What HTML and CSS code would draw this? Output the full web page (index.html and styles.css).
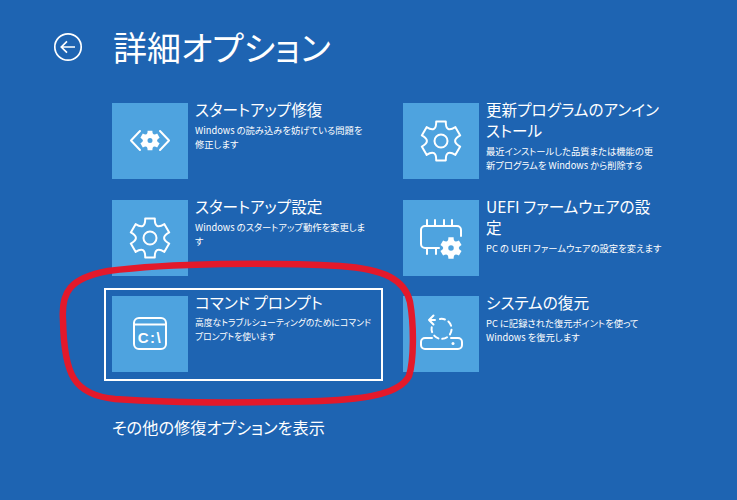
FILE: index.html
```html
<!DOCTYPE html>
<html lang="ja">
<head>
<meta charset="utf-8">
<title>詳細オプション</title>
<link rel="stylesheet" href="styles.css">
</head>
<body>
<div class="page">
  <header class="head">
    <svg class="back" viewBox="0 0 30 30"><circle cx="15" cy="15" r="13.200"/><path d="M22 15H8.500M14 9.300L8.300 15l5.700 5.700"/></svg>
    <h1>詳細オプション</h1>
  </header>
  <main class="grid">
    <section class="item">
      <div class="tile"><svg viewBox="0 0 76 76">
        <path class="ln" d="M28 28L19 37.500L28 47M48 28L57 37.500L48 47"/>
        <g transform="translate(38 37.500) scale(.5)"><path class="solid" fill-rule="evenodd" d="M-4.800-19.400H4.800Q4.500-7.800 14.400-13.860L19.200-5.540Q9 0 19.200 5.540L14.400 13.860Q4.500 7.800 4.800 19.400H-4.800Q-4.500 7.800-14.400 13.860L-19.200 5.540Q-9 0-19.200-5.540L-14.400-13.860Q-4.500-7.800-4.800-19.400ZM5 0A5 5 0 1 0-5 0A5 5 0 1 0 5 0Z"/></g>
      </svg></div>
      <div class="copy"><h2>スタートアップ修復</h2><p>Windows の読み込みを妨げている問題を<br>修正します</p></div>
    </section>
    <section class="item">
      <div class="tile"><svg viewBox="0 0 76 76"><g transform="translate(38 38)">
        <path class="ln" d="M-4.800-19.400H4.800Q4.500-7.800 14.400-13.860L19.200-5.540Q9 0 19.200 5.540L14.400 13.860Q4.500 7.800 4.800 19.400H-4.800Q-4.500 7.800-14.400 13.860L-19.200 5.540Q-9 0-19.200-5.540L-14.400-13.860Q-4.500-7.800-4.800-19.400Z"/><circle class="ln" r="6.500"/>
      </g></svg></div>
      <div class="copy"><h2>更新プログラムのアンイン<br>ストール</h2><p>最近インストールした品質または機能の更<br>新プログラムを Windows から削除する</p></div>
    </section>
    <section class="item">
      <div class="tile"><svg viewBox="0 0 76 76"><g transform="translate(38 38)">
        <path class="ln" d="M-4.800-19.400H4.800Q4.500-7.800 14.400-13.860L19.200-5.540Q9 0 19.200 5.540L14.400 13.860Q4.500 7.800 4.800 19.400H-4.800Q-4.500 7.800-14.400 13.860L-19.200 5.540Q-9 0-19.200-5.540L-14.400-13.860Q-4.500-7.800-4.800-19.400Z"/><circle class="ln" r="6.500"/>
      </g></svg></div>
      <div class="copy"><h2>スタートアップ設定</h2><p>Windows のスタートアップ動作を変更しま<br>す</p></div>
    </section>
    <section class="item">
      <div class="tile"><svg viewBox="0 0 76 76">
        <path class="ln" d="M36 48H22a4 4 0 0 1-4-4V30a4 4 0 0 1 4-4H54a4 4 0 0 1 4 4V36M24 26V20M32 26V20M41 26V20M49 26V20M24 48V54M33 48V54"/>
        <g transform="translate(48 48) scale(.55)"><path class="solid" fill-rule="evenodd" d="M-4.800-19.400H4.800Q4.500-7.800 14.400-13.860L19.200-5.540Q9 0 19.200 5.540L14.400 13.860Q4.500 7.800 4.800 19.400H-4.800Q-4.500 7.800-14.400 13.860L-19.200 5.540Q-9 0-19.200-5.540L-14.400-13.860Q-4.500-7.800-4.800-19.400ZM5 0A5 5 0 1 0-5 0A5 5 0 1 0 5 0Z"/></g>
      </svg></div>
      <div class="copy"><h2>UEFI ファームウェアの設<br>定</h2><p>PC の UEFI ファームウェアの設定を変えます</p></div>
    </section>
    <section class="item selected">
      <div class="tile"><svg viewBox="0 0 76 76">
        <rect class="ln" x="22" y="22" width="32" height="31" rx="5"/><path class="ln" d="M22 28.500H54"/>
        <text class="cmd" x="38" y="46.500">C:\</text>
      </svg></div>
      <div class="copy"><h2>コマンド プロンプト</h2><p>高度なトラブルシューティングのためにコマンド<br>プロンプトを使います</p></div>
    </section>
    <section class="item">
      <div class="tile"><svg viewBox="0 0 76 76">
        <path class="ln" d="M29 42H22a4 4 0 0 0-4 4v3a4 4 0 0 0 4 4H55a4 4 0 0 0 4-4V46a4 4 0 0 0-4-4H48"/>
        <path class="ln dash" d="M37 23A10 10 0 1 1 29 30"/>
        <path class="ln" d="M32 24H26M30.500 19.500L26 24L30.500 28.500"/>
        <circle class="solid" cx="50" cy="47.500" r="1.500"/>
      </svg></div>
      <div class="copy"><h2>システムの復元</h2><p>PC に記録された復元ポイントを使って<br>Windows を復元します</p></div>
    </section>
  </main>
  <p class="more">その他の修復オプションを表示</p>
  <svg class="circle" viewBox="0 0 737 500"><path d="M63 320C61 292 70 278 108 271C170 263 270 262 340 266C385 269 405 280 410 302C414 325 414 360 409 376C400 393 370 399 320 401C250 403 170 403 115 399C74 395 64 375 63 320Z"/></svg>
</div>
</body>
</html>
```

FILE: styles.css
```css
* { box-sizing: border-box; }
html, body { margin: 0; height: 100%; }
body {
  background: #1e64b2;
  color: #fff;
  font-family: "Noto Sans CJK JP", "Noto Sans", sans-serif;
  font-feature-settings: "palt";
  overflow: hidden;
}
.page { position: relative; width: 737px; height: 500px; padding-top: 24px; }
.head { display: flex; align-items: center; height: 46px; padding-left: 53px; gap: 30px; }
.back { width: 30px; height: 30px; fill: none; stroke: #fff; stroke-width: 1.700; }
h1 { margin: 0; font-size: 34px; font-weight: 400; line-height: 46px; white-space: nowrap; }
.grid {
  display: grid;
  grid-template-columns: 279px 279px;
  grid-auto-rows: 93px;
  column-gap: 12px;
  row-gap: 3.500px;
  margin: 25px 0 0 104px;
}
.item { display: flex; gap: 7px; border: 2px solid transparent; padding: 6px 5px 6px 6px; }
.selected { border-color: #fff; }
.tile { flex: none; width: 76px; height: 76px; background: #4ea3df; }
.tile svg { display: block; width: 76px; height: 76px; }
.ln { fill: none; stroke: #fff; stroke-width: 2; stroke-linejoin: round; stroke-linecap: round; }
.solid { fill: #fff; }
.dash { stroke-dasharray: 5 4; }
.cmd { fill: #fff; font-family: "Liberation Sans", sans-serif; font-size: 15px; font-weight: 700; text-anchor: middle; letter-spacing: 1.500px; }
.copy { min-width: 0; margin-top: -4px; }
h2 { margin: 0; font-size: 15.600px; font-weight: 400; line-height: 21px; white-space: nowrap; }
.copy p { margin: 3px 0 0; font-size: 9.300px; line-height: 14px; white-space: nowrap; }
.selected .copy p { font-size: 8.800px; }
.more { margin: 35px 0 0 112px; font-size: 16.200px; line-height: 22px; white-space: nowrap; }
.circle { position: absolute; left: 0; top: 0; width: 737px; height: 500px; fill: none; stroke: #e3192b; stroke-width: 6.500; pointer-events: none; }
```
